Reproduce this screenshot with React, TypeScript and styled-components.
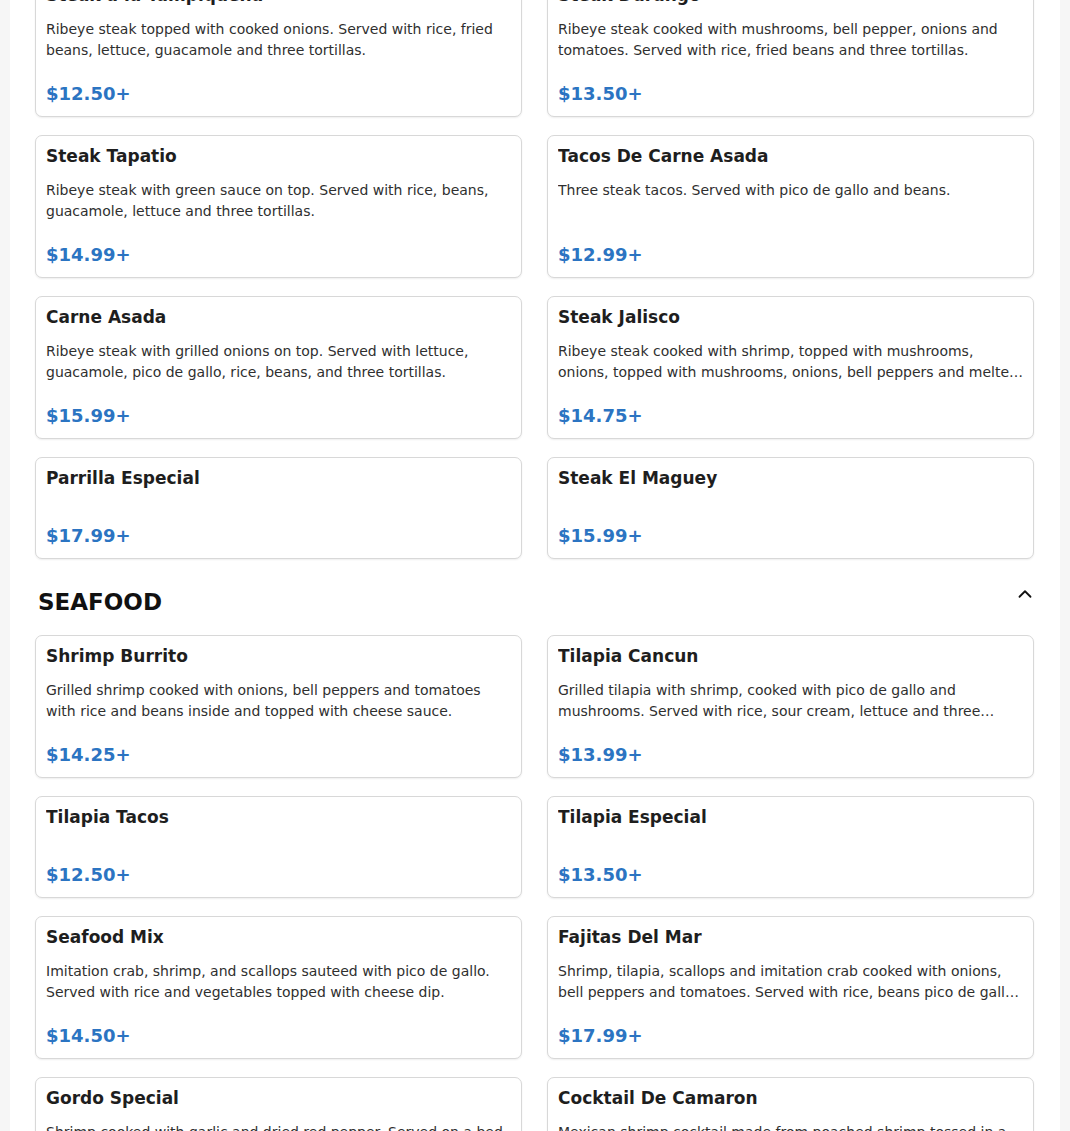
import styled, { createGlobalStyle } from "styled-components";
import { ChevronUp } from "lucide-react";

interface MenuItem {
    name: string,
    description?: string,
    price: string
}

interface MenuSection {
    title: string,
    showHeader: boolean,
    items: MenuItem[]
}

const sections: MenuSection[] = [
    {
        title: "STEAK",
        showHeader: false,
        items: [
            { name: "Steak a la Tampiqueña", description: "Ribeye steak topped with cooked onions. Served with rice, fried beans, lettuce, guacamole and three tortillas.", price: "$12.50+" },
            { name: "Steak Durango", description: "Ribeye steak cooked with mushrooms, bell pepper, onions and tomatoes. Served with rice, fried beans and three tortillas.", price: "$13.50+" },
            { name: "Steak Tapatio", description: "Ribeye steak with green sauce on top. Served with rice, beans, guacamole, lettuce and three tortillas.", price: "$14.99+" },
            { name: "Tacos De Carne Asada", description: "Three steak tacos. Served with pico de gallo and beans.", price: "$12.99+" },
            { name: "Carne Asada", description: "Ribeye steak with grilled onions on top. Served with lettuce, guacamole, pico de gallo, rice, beans, and three tortillas.", price: "$15.99+" },
            { name: "Steak Jalisco", description: "Ribeye steak cooked with shrimp, topped with mushrooms, onions, topped with mushrooms, onions, bell peppers and melted cheese.", price: "$14.75+" },
            { name: "Parrilla Especial", price: "$17.99+" },
            { name: "Steak El Maguey", price: "$15.99+" },
        ]
    },
    {
        title: "SEAFOOD",
        showHeader: true,
        items: [
            { name: "Shrimp Burrito", description: "Grilled shrimp cooked with onions, bell peppers and tomatoes with rice and beans inside and topped with cheese sauce.", price: "$14.25+" },
            { name: "Tilapia Cancun", description: "Grilled tilapia with shrimp, cooked with pico de gallo and mushrooms. Served with rice, sour cream, lettuce and three tortillas.", price: "$13.99+" },
            { name: "Tilapia Tacos", price: "$12.50+" },
            { name: "Tilapia Especial", price: "$13.50+" },
            { name: "Seafood Mix", description: "Imitation crab, shrimp, and scallops sauteed with pico de gallo. Served with rice and vegetables topped with cheese dip.", price: "$14.50+" },
            { name: "Fajitas Del Mar", description: "Shrimp, tilapia, scallops and imitation crab cooked with onions, bell peppers and tomatoes. Served with rice, beans pico de gallo, sour cream and tortillas.", price: "$17.99+" },
            { name: "Gordo Special", description: "Shrimp cooked with garlic and dried red pepper. Served on a bed of rice with lettuce and pico de gallo.", price: "$15.99+" },
            { name: "Cocktail De Camaron", description: "Mexican shrimp cocktail made from poached shrimp tossed in a tomato sauce with avocado, onion and cilantro.", price: "$14.99+" },
        ]
    }
]

function App(){
    return(
        <>
            <GlobalStyle />
            <Main>
                {sections.map(section =>
                <Section key={section.title}>
                    {section.showHeader &&
                    <SectionHeader>
                        <SectionTitle>{section.title}</SectionTitle>
                        <Toggle aria-label="collapse">
                            <ChevronUp size={22} strokeWidth={2} />
                        </Toggle>
                    </SectionHeader>}
                    <Grid>
                        {section.items.map(item =>
                        <Card key={item.name}>
                            <ItemName>{item.name}</ItemName>
                            {item.description && <Description>{item.description}</Description>}
                            <Price hasDesc={!!item.description}>{item.price}</Price>
                        </Card>)}
                    </Grid>
                </Section>)}
            </Main>
        </>
    )
}
export default App;

const GlobalStyle = createGlobalStyle`
    html, body {
        margin: 0;
        padding: 0;
        background-color: #f6f6f6;
        font-family: "DejaVu Sans", "Noto Sans", sans-serif;
    }
    * {
        box-sizing: border-box;
    }
`

const Main = styled.main`
    width: 1050px;
    min-height: 1200px;
    margin: -26px auto 0 auto;
    padding: 0 26px 40px 25px;
    background-color: #ffffff;
`

const Section = styled.section`
    display: flex;
    flex-direction: column;
`

const SectionHeader = styled.div`
    display: flex;
    justify-content: space-between;
    align-items: flex-start;
    padding: 30px 0 0 3px;
    margin-bottom: 19px;
`

const SectionTitle = styled.h2`
    margin: 0;
    font-size: 23px;
    line-height: 27px;
    font-weight: 700;
    color: #111111;
`

const Toggle = styled.button`
    display: flex;
    align-items: center;
    justify-content: center;
    width: 22px;
    height: 22px;
    margin: -6px -2px 0 0;
    padding: 0;
    border: none;
    background: none;
    color: #111111;
    cursor: pointer;
`

const Grid = styled.div`
    display: grid;
    grid-template-columns: 1fr 1fr;
    column-gap: 25px;
    row-gap: 18px;
`

const Card = styled.div`
    display: flex;
    flex-direction: column;
    padding: 10px 8px 9px 10px;
    border: 1px solid #d8d8d8;
    border-radius: 7px;
    background-color: #ffffff;
    box-shadow: 0 1px 2px rgba(0, 0, 0, 0.07);
    cursor: pointer;
`

const ItemName = styled.h3`
    margin: 0;
    font-size: 17px;
    line-height: 20px;
    font-weight: 700;
    color: #1e1e1e;
    white-space: nowrap;
    overflow: hidden;
    text-overflow: ellipsis;
`

const Description = styled.p`
    margin: 14px 0 0 0;
    height: 42px;
    font-size: 14px;
    line-height: 21px;
    color: #2f2f2f;
    display: -webkit-box;
    -webkit-line-clamp: 2;
    -webkit-box-orient: vertical;
    overflow: hidden;
`

const Price = styled.div<{hasDesc:boolean}>`
    margin-top: ${props => props.hasDesc ? "19px" : "34px"};
    font-size: 18px;
    line-height: 27px;
    font-weight: 700;
    color: #2b74c2;
`
